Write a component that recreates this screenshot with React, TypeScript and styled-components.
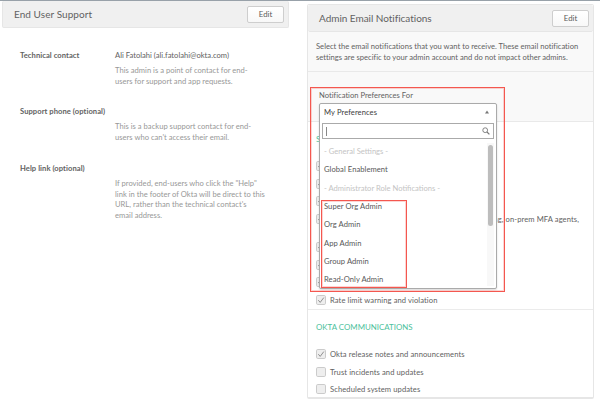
import React from "react";
import styled, { createGlobalStyle } from "styled-components";

const GlobalStyle = createGlobalStyle`
  * { box-sizing: border-box; }
  body { margin: 0; background: #fff; overflow: hidden; }
  p, h2, h3, ul { margin: 0; padding: 0; font-weight: 400; }
`;

const Page = styled.div`
  width: 600px;
  height: 400px;
  overflow: hidden;
  border-top: 1px solid #98a1a9;
  display: flex;
  align-items: flex-start;
  gap: 18px;
  padding-left: 2px;
  background: #fff;
  color: #626262;
  font: 7.6px/10.7px Lato, "Open Sans", sans-serif;
  letter-spacing: 0.01px;
  white-space: nowrap;
`;

const SupportPanel = styled.section`
  width: 287px;
`;

const NotificationPanel = styled.section`
  position: relative;
  width: 287px;
  height: 395px;
  margin-top: 3px;
  border: 1px solid #e6e6e6;
  border-bottom-width: 2px;
  border-radius: 2px;
`;

const PanelHeader = styled.header<{ $attached?: boolean }>`
  display: flex;
  align-items: center;
  justify-content: space-between;
  height: 27px;
  padding: 0 4px 0 11px;
  background: #f0f0f0;
  border: 1px solid #e6e6e6;
  border-width: ${(p) => (p.$attached ? "0 0 1px" : "0 1px 1px")};
  border-radius: 2px;
`;

const Title = styled.h2<{ $spacing: number }>`
  font-size: 10px;
  line-height: 12px;
  padding-bottom: 1px;
  letter-spacing: ${(p) => p.$spacing}px;
`;

const EditButton = styled.button`
  width: 37px;
  height: 17px;
  padding: 0;
  background: linear-gradient(#fff, #f8f8f8);
  border: 1px solid #cecece;
  border-radius: 2px;
  color: #5a5a5a;
  font: inherit;
  font-size: 7.8px;
`;

const Fields = styled.div`
  display: grid;
  grid-template-columns: 95px 1fr;
  padding: 22px 0 0 18px;
`;

const Label = styled.div`
  font-weight: 700;
  letter-spacing: 0.06px;
`;

const Value = styled.div<{ $gap: number }>`
  padding-bottom: ${(p) => p.$gap}px;
`;

const Contact = styled.p`
  height: 15px;
`;

const Hint = styled.p`
  color: #989898;
`;

const Description = styled.div`
  height: 40px;
  padding: 9px 8px;
  background: #f9f9f9;
  border-bottom: 1px solid #e9e9e9;
`;

const PreferenceBar = styled.div`
  height: 50px;
  padding: 18px 11px 0;
  background: #f9f9f9;
  border-bottom: 1px solid #e9e9e9;
`;

const Section = styled.div<{ $height: number }>`
  height: ${(p) => p.$height}px;
  padding: 11px 8px 0;
  border-bottom: 1px solid #ebebeb;
`;

const LastSection = styled(Section)`
  border-bottom: 0;
`;

const SectionTitle = styled.h3`
  height: 28px;
  color: #4cbf9c;
  font-size: 7.9px;
  line-height: 12px;
`;

const CheckRow = styled.label<{ $height?: number }>`
  display: flex;
  align-items: flex-start;
  height: ${(p) => p.$height ?? 17.7}px;
  letter-spacing: 0.09px;
`;

const CheckMark = styled.svg`
  flex: none;
  width: 10px;
  height: 10px;
  margin-right: 4px;
`;

const WrappedText = styled.span`
  width: 249px;
  text-align: right;
`;

const Dropdown = styled.div`
  position: absolute;
  left: 11px;
  top: 98px;
  width: 178px;
  height: 186px;
  padding: 0 2px;
  background: #fff;
  border: 1px solid #aaa;
  border-radius: 2px;
  box-shadow: 0 1px 2px rgba(0, 0, 0, 0.15);
`;

const Selected = styled.div`
  display: flex;
  align-items: center;
  justify-content: space-between;
  height: 19px;
  padding: 0 5px 3px 2px;
  color: #3c3c3c;
  letter-spacing: 0.08px;
`;

const Search = styled.div`
  display: flex;
  align-items: center;
  justify-content: space-between;
  height: 16px;
  padding: 0 3px;
  border: 1px solid #aaa;
`;

const Caret = styled.span`
  width: 1px;
  height: 9px;
  background: #888;
`;

const Options = styled.ul`
  position: relative;
  list-style: none;
  padding: 3px 0 0 2px;
`;

const Option = styled.li<{ $group?: boolean }>`
  height: 18.35px;
  line-height: 18.35px;
  letter-spacing: ${(p) => (p.$group ? 0 : 0.06)}px;
  color: ${(p) => (p.$group ? "#c4c4c4" : "#585858")};
`;

const Track = styled.div`
  position: absolute;
  right: 0;
  top: 4px;
  width: 7px;
  height: 143px;
  padding: 2px 0 0 1px;
  background: #f8f8f8;
`;

const Thumb = styled.div`
  width: 5px;
  height: 81px;
  border-radius: 3px;
  background: #bdbdbd;
`;

const Highlight = styled.div<{ $x: number; $y: number; $w: number; $h: number }>`
  position: absolute;
  left: ${(p) => p.$x}px;
  top: ${(p) => p.$y}px;
  width: ${(p) => p.$w}px;
  height: ${(p) => p.$h}px;
  border: 1px solid #f4574f;
  box-shadow: inset 0 0 0 1px rgba(244, 87, 79, 0.25);
`;

function Check({ checked = true }: { checked?: boolean }) {
  return (
    <CheckMark viewBox="0 0 10 10">
      <rect x=".5" y=".5" width="9" height="9" rx="1.3" fill="#eee" stroke="#cbcbcb" />
      {checked && <path d="M2.3 5.2 4.2 7.4 7.8 2.6" fill="none" stroke="#858585" strokeWidth=".9" />}
    </CheckMark>
  );
}

const options = [
  { text: "- General Settings -", group: true },
  { text: "Global Enablement" },
  { text: "- Administrator Role Notifications -", group: true },
  { text: "Super Org Admin" },
  { text: "Org Admin" },
  { text: "App Admin" },
  { text: "Group Admin" },
  { text: "Read-Only Admin" },
];

export default function App() {
  return (
    <>
      <GlobalStyle />
      <Page>
        <SupportPanel>
          <PanelHeader>
            <Title $spacing={0.06}>End User Support</Title>
            <EditButton>Edit</EditButton>
          </PanelHeader>
          <Fields>
            <Label>Technical contact</Label>
            <Value $gap={20}>
              <Contact>Ali Fatolahi (ali.fatolahi@okta.com)</Contact>
              <Hint>This admin is a point of contact for end-<br />users for support and app requests.</Hint>
            </Value>
            <Label>Support phone (optional)</Label>
            <Value $gap={20}>
              <Contact />
              <Hint>This is a backup support contact for end-<br />users who can't access their email.</Hint>
            </Value>
            <Label>Help link (optional)</Label>
            <Value $gap={0}>
              <Contact />
              <Hint>
                If provided, end-users who click the "Help"<br />link in the footer of Okta will be direct to this<br />
                URL, rather than the technical contact's<br />email address.
              </Hint>
            </Value>
          </Fields>
        </SupportPanel>

        <NotificationPanel>
          <PanelHeader $attached>
            <Title $spacing={-0.03}>Admin Email Notifications</Title>
            <EditButton>Edit</EditButton>
          </PanelHeader>
          <Description>
            Select the email notifications that you want to receive. These email notification<br />
            settings are specific to your admin account and do not impact other admins.
          </Description>
          <PreferenceBar>Notification Preferences For</PreferenceBar>
          <Section $height={188}>
            <SectionTitle>SYSTEM</SectionTitle>
            <CheckRow><Check /></CheckRow>
            <CheckRow><Check /></CheckRow>
            <CheckRow><Check /></CheckRow>
            <CheckRow $height={28}><Check /><WrappedText>ng, on-prem MFA agents,</WrappedText></CheckRow>
            <CheckRow><Check /></CheckRow>
            <CheckRow><Check /></CheckRow>
            <CheckRow><Check /></CheckRow>
            <CheckRow><Check />Rate limit warning and violation</CheckRow>
          </Section>
          <LastSection $height={86}>
            <SectionTitle>OKTA COMMUNICATIONS</SectionTitle>
            <CheckRow><Check />Okta release notes and announcements</CheckRow>
            <CheckRow><Check checked={false} />Trust incidents and updates</CheckRow>
            <CheckRow><Check checked={false} />Scheduled system updates</CheckRow>
          </LastSection>

          <Dropdown>
            <Selected>
              My Preferences
              <svg width="4" height="4" viewBox="0 0 4 4"><path d="M0 3.5 2 .5 4 3.5z" fill="#777" /></svg>
            </Selected>
            <Search>
              <Caret />
              <svg width="8" height="8" viewBox="0 0 8 8" fill="none" stroke="#777">
                <circle cx="3.2" cy="3.2" r="2.4" strokeWidth=".9" />
                <path d="m5 5 2.4 2.4" strokeWidth="1.2" />
              </svg>
            </Search>
            <Options>
              {options.map((o) => <Option key={o.text} $group={o.group}>{o.text}</Option>)}
              <Track><Thumb /></Track>
            </Options>
          </Dropdown>
          <Highlight $x={2} $y={82} $w={195} $h={205} />
          <Highlight $x={13} $y={195} $w={86} $h={88} />
        </NotificationPanel>
      </Page>
    </>
  );
}
